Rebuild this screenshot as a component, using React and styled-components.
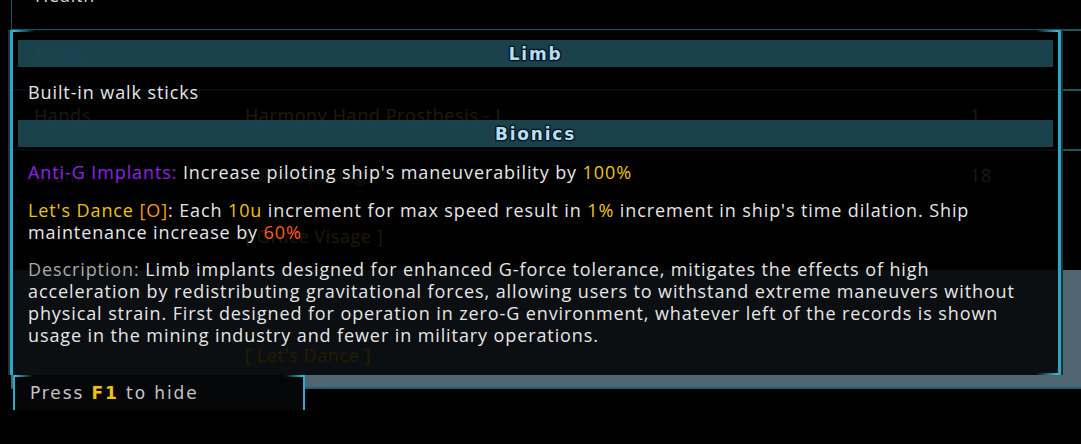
import React from "react";
import styled, { createGlobalStyle } from "styled-components";

const Global = createGlobalStyle`
  html, body { margin: 0; padding: 0; background: #000; }
  body { font-family: "Open Sans", "Lato", sans-serif; }
  #root { width: 1081px; height: 444px; }
`;

const COLORS = {
  purple: "#8e24ea",
  yellow: "#f1c40a",
  orange: "#f39a12",
  red: "#ff5b17",
  gray: "#a9a9a9",
  white: "#e6e6e6",
};

const Page = styled.div`
  position: relative;
  width: 1081px;
  height: 444px;
  overflow: hidden;
  background: #000;
`;

/* ---------- underlying page (seen through the tooltip) ---------- */

const Frame = styled.div`
  margin-left: 11px;
  display: flex;
  flex-direction: column;
`;

const TopStrip = styled.div`
  height: 29px;
  box-sizing: border-box;
  border-left: 1px solid #1c5864;
  padding-left: 23px;
  overflow: hidden;
`;

const HealthLabel = styled.div`
  margin-top: -15.5px;
  font-size: 18px;
  line-height: 20px;
  letter-spacing: 0.8px;
  color: #d8d8d8;
`;

const TableRow = styled.div`
  height: ${(p) => p.$h}px;
  box-sizing: border-box;
  border-top: 2px solid #1b5562;
  padding: 13px 0 0 23px;
  display: grid;
  grid-template-columns: 211px 725px 1fr;
  grid-auto-rows: 22px;
  row-gap: 39px;
  align-content: start;
  font-size: 18px;
  line-height: 22px;
  letter-spacing: 0.6px;
  color: #a0a0a0;
`;

const Cell = styled.span`
  color: ${(p) => p.$c || "inherit"};
  grid-column: ${(p) => p.$col || "auto"};
`;

const GrayPanel = styled.div`
  height: 117px;
  box-sizing: border-box;
  background: #4f6571;
  padding: 74px 0 0 234px;
  font-size: 18px;
  line-height: 22px;
  letter-spacing: 0.6px;
  color: #f3b400;
`;

const BottomRule = styled.div`
  height: 2px;
  background: #1e6170;
`;

/* ---------- tooltip overlay ---------- */

const Tooltip = styled.section`
  position: absolute;
  left: 10px;
  top: 30px;
  width: 1051px;
  height: 345px;
  box-sizing: border-box;
  border-left: 3px solid #27a9c9;
  border-right: 3px solid #27a9c9;
  box-shadow: -2px 0 0 #2a2f31, 2px 0 0 #2a2f31;
  background:
    linear-gradient(to right, #3cc0e0, rgba(60, 192, 224, 0)) top left / 22px 2px no-repeat,
    linear-gradient(to left, #3cc0e0, rgba(60, 192, 224, 0)) top right / 22px 2px no-repeat,
    linear-gradient(to left, #3cc0e0, rgba(60, 192, 224, 0)) bottom right / 22px 2px no-repeat,
    rgba(0, 0, 0, 0.85);
  padding: 10px 5px 0;
  display: flex;
  flex-direction: column;
  color: ${COLORS.white};
  font-family: "Open Sans", sans-serif;
  font-size: 18px;
  line-height: 22px;
  letter-spacing: 0.9px;
`;

const SectionBar = styled.h2`
  margin: 0 0 ${(p) => p.$mb}px;
  height: 27px;
  background: rgba(28, 75, 88, 0.88);
  display: flex;
  align-items: center;
  justify-content: center;
  font-family: "DejaVu Sans", sans-serif;
  font-weight: 700;
  font-size: 17px;
  letter-spacing: 1.8px;
  color: #b3def6;
  text-shadow: 1px 1px 0 #061014, -1px -1px 0 #061014, 1px -1px 0 #061014,
    -1px 1px 0 #061014, 0 0 3px #000;
`;

const Para = styled.p`
  margin: 0 0 ${(p) => p.$mb || 0}px;
  padding-left: 10px;
  white-space: nowrap;
`;

const Tone = styled.span`
  color: ${(p) => COLORS[p.$c]};
`;

/* ---------- hint box ---------- */

const HintBox = styled.div`
  position: absolute;
  left: 13px;
  top: 375px;
  width: 292px;
  height: 35px;
  box-sizing: border-box;
  border-left: 2px solid #2aaecd;
  border-right: 2px solid #2aaecd;
  background:
    linear-gradient(to right, #3cc0e0, rgba(60, 192, 224, 0)) top left / 18px 2px no-repeat,
    linear-gradient(to left, #3cc0e0, rgba(60, 192, 224, 0)) top right / 18px 2px no-repeat,
    #050607;
  padding-left: 15px;
  display: flex;
  align-items: center;
`;

const HintText = styled.span`
  font-family: "DejaVu Sans", sans-serif;
  font-size: 17px;
  letter-spacing: 1.9px;
  color: #c4c4c4;
`;

const Key = styled.span`
  color: ${COLORS.yellow};
  font-weight: 700;
`;

export default function App() {
  return (
    <Page>
      <Global />
      <Frame>
        <TopStrip>
          <HealthLabel>Health</HealthLabel>
        </TopStrip>
        <TableRow $h={60}>
          <Cell>Torso</Cell>
        </TableRow>
        <TableRow $h={60}>
          <Cell>Hands</Cell>
          <Cell $c="#d2b23a">Harmony Hand Prosthesis - I</Cell>
          <Cell>1</Cell>
        </TableRow>
        <TableRow $h={121}>
          <Cell $c="#6a6a6a">Brain</Cell>
          <Cell $c="#3d7482">Gene Splicing</Cell>
          <Cell $c="#8aa4b2">18</Cell>
          <Cell $col="2" $c="#cf9f10">[ Grace Visage ]</Cell>
        </TableRow>
        <GrayPanel>[ Let's Dance ]</GrayPanel>
        <BottomRule />
      </Frame>

      <Tooltip>
        <SectionBar $mb={14}>Limb</SectionBar>
        <Para $mb={17}>Built-in walk sticks</Para>
        <SectionBar $mb={14}>Bionics</SectionBar>
        <Para $mb={16}>
          <Tone $c="purple">Anti-G Implants:</Tone> Increase piloting ship's maneuverability by{" "}
          <Tone $c="yellow">100%</Tone>
        </Para>
        <Para $mb={15}>
          <Tone $c="yellow">Let's Dance </Tone>
          <Tone $c="orange">[O]</Tone>: Each <Tone $c="yellow">10u</Tone> increment for max speed
          result in <Tone $c="yellow">1%</Tone> increment in ship's time dilation. Ship
          <br />
          maintenance increase by <Tone $c="red">60%</Tone>
        </Para>
        <Para>
          <Tone $c="gray">Description:</Tone> Limb implants designed for enhanced G-force
          tolerance, mitigates the effects of high
          <br />
          acceleration by redistributing gravitational forces, allowing users to withstand
          extreme maneuvers without
          <br />
          physical strain. First designed for operation in zero-G environment, whatever left of
          the records is shown
          <br />
          usage in the mining industry and fewer in military operations.
        </Para>
      </Tooltip>

      <HintBox>
        <HintText>
          Press <Key>F1</Key> to hide
        </HintText>
      </HintBox>
    </Page>
  );
}
